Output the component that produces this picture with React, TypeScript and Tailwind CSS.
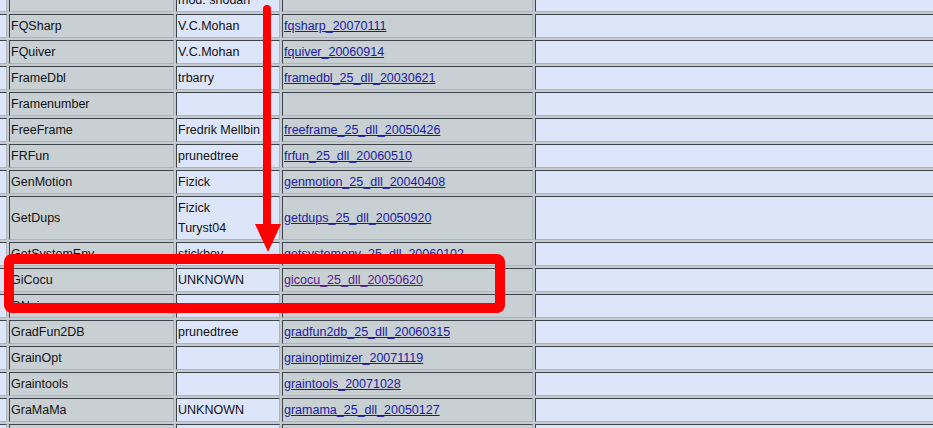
import React from "react";

type Row = { c1: string; c2: string[]; c3: string; visited?: boolean };

const rows: Row[] = [
  { c1: "", c2: ["Fizick", "mod: shodan"], c3: "" },
  { c1: "FQSharp", c2: ["V.C.Mohan"], c3: "fqsharp_20070111" },
  { c1: "FQuiver", c2: ["V.C.Mohan"], c3: "fquiver_20060914" },
  { c1: "FrameDbl", c2: ["trbarry"], c3: "framedbl_25_dll_20030621" },
  { c1: "Framenumber", c2: [""], c3: "" },
  { c1: "FreeFrame", c2: ["Fredrik Mellbin"], c3: "freeframe_25_dll_20050426" },
  { c1: "FRFun", c2: ["prunedtree"], c3: "frfun_25_dll_20060510" },
  { c1: "GenMotion", c2: ["Fizick"], c3: "genmotion_25_dll_20040408" },
  { c1: "GetDups", c2: ["Fizick", "Turyst04"], c3: "getdups_25_dll_20050920" },
  { c1: "GetSystemEnv", c2: ["stickboy"], c3: "getsystemenv_25_dll_20060102" },
  { c1: "GiCocu", c2: ["UNKNOWN"], c3: "gicocu_25_dll_20050620", visited: true },
  { c1: "GNoise", c2: [""], c3: "" },
  { c1: "GradFun2DB", c2: ["prunedtree"], c3: "gradfun2db_25_dll_20060315" },
  { c1: "GrainOpt", c2: [""], c3: "grainoptimizer_20071119" },
  { c1: "Graintools", c2: [""], c3: "graintools_20071028" },
  { c1: "GraMaMa", c2: ["UNKNOWN"], c3: "gramama_25_dll_20050127" },
  { c1: "", c2: [""], c3: "" },
];

const cellBase =
  "border border-t-[#3d434a] border-l-[#3d434a] border-b-[#aeb5bb] border-r-[#aeb5bb] p-px leading-[20px] flex flex-col justify-center whitespace-nowrap overflow-hidden";
const grey = "bg-[#c8d0d4]";
const blue = "bg-[#dde5fa]";

export default function App() {
  return (
    <div className="relative w-[933px] h-[428px] overflow-hidden bg-[#c4cacd] font-['Liberation_Sans',Arial,sans-serif] text-[12.5px] text-[#111]">
      <div className="-mt-[34px] -ml-[35px] grid grid-cols-[40px_165px_104px_251px_500px] gap-[2px] p-[2px] w-max">
        {rows.map((r, i) => (
          <React.Fragment key={i}>
            <div className={`${cellBase} ${blue}`}>
              <span>&nbsp;</span>
            </div>
            <div className={`${cellBase} ${grey}`}>
              <span>{r.c1 || "\u00a0"}</span>
            </div>
            <div className={`${cellBase} ${blue}`}>
              {r.c2.map((t, j) => (
                <span key={j}>{t || "\u00a0"}</span>
              ))}
            </div>
            <div className={`${cellBase} ${grey}`}>
              {r.c3 ? (
                <span>
                  <a
                    href="#"
                    className={`underline ${r.visited ? "text-[#551a8b]" : "text-[#1a1aa6]"}`}
                  >
                    {r.c3}
                  </a>
                </span>
              ) : (
                <span>&nbsp;</span>
              )}
            </div>
            <div className={`${cellBase} ${blue}`}>
              <span>&nbsp;</span>
            </div>
          </React.Fragment>
        ))}
      </div>
      <svg
        className="absolute left-0 top-0 pointer-events-none"
        width="933"
        height="428"
        viewBox="0 0 933 428"
      >
        <line x1="267" y1="9" x2="267" y2="228" stroke="#ff0000" strokeWidth="8" strokeLinecap="round" />
        <polygon points="255,224 281,224 268,252" fill="#ff0000" />
        <rect x="9" y="259" width="491" height="49" rx="3" fill="none" stroke="#ff0000" strokeWidth="10" />
      </svg>
    </div>
  );
}
